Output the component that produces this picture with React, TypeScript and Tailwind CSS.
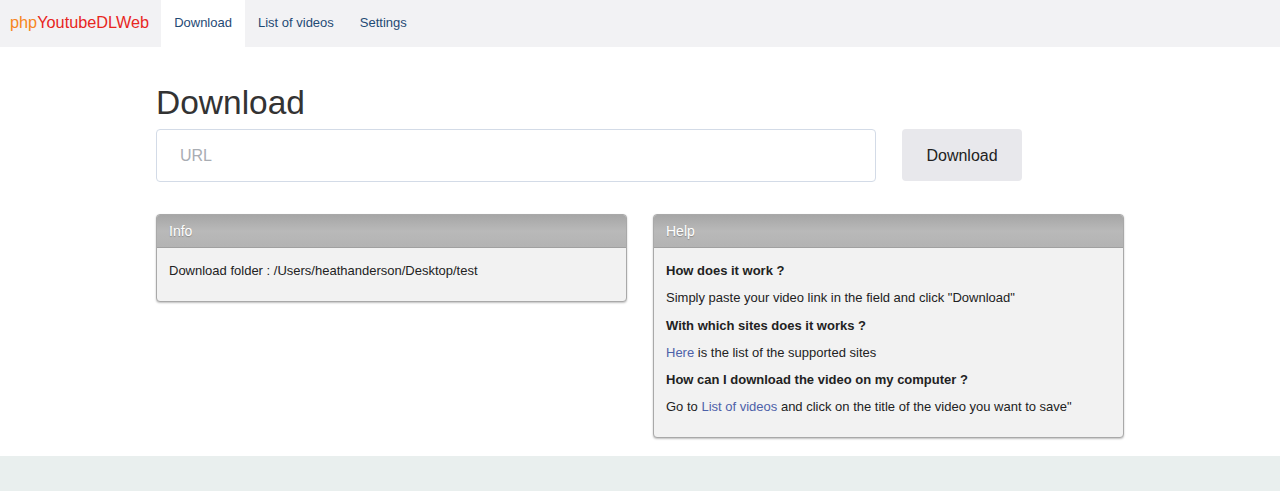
import React from "react";

function Panel({ title, children }: { title: string; children: React.ReactNode }) {
  return (
    <div className="rounded-[4px] border border-[#a9a9a9] bg-[#f2f2f2] shadow-[0_1px_2px_rgba(0,0,0,0.25)] overflow-hidden">
      <div className="h-[33px] flex items-center px-[12px] bg-gradient-to-b from-[#a6a6a6] via-[#b9b9b9] to-[#b3b3b3] border-b border-[#a0a0a0] text-white text-[14px] [text-shadow:0_1px_1px_rgba(0,0,0,0.25)]">
        {title}
      </div>
      <div className="px-[12px] pt-[14px] pb-[13px] text-[13px] leading-[18px] text-[#222]">{children}</div>
    </div>
  );
}

export default function App() {
  return (
    <div className="min-h-[491px] bg-white flex flex-col" style={{ fontFamily: '"Liberation Sans", Arial, sans-serif' }}>
      <nav className="h-[47px] bg-[#f2f2f4] flex items-stretch">
        <div className="flex items-center pl-[10px] pr-[12px] pb-[2px] text-[16.3px]">
          <span className="text-[#f7861d]">php</span>
          <span className="text-[#e8261e]">YoutubeDLWeb</span>
        </div>
        <div className="flex items-center px-[13px] pb-[2px] bg-white text-[13px] text-[#1f4a75]">Download</div>
        <div className="flex items-center px-[13px] pb-[2px] text-[13px] text-[#1f4a75]">List of videos</div>
        <div className="flex items-center px-[13px] pb-[2px] text-[13px] text-[#1f4a75]">Settings</div>
      </nav>

      <main className="w-[968px] mx-auto pt-[37px] pb-[18px]">
        <h1 className="text-[33.5px] leading-[37px] text-[#333] font-normal">Download</h1>
        <div className="mt-[8px] flex items-start gap-[26px]">
          <input
            placeholder="URL"
            className="w-[720px] h-[53px] rounded-[4px] border border-[#d3dbe7] px-[23px] text-[16px] text-[#333] placeholder:text-[#a9adb3] outline-none"
          />
          <button className="w-[120px] h-[52px] pt-[2px] rounded-[4px] bg-[#e8e8ec] text-[16px] text-[#222]">Download</button>
        </div>

        <div className="mt-[32px] grid grid-cols-2 gap-[26px] items-start">
          <Panel title="Info">
            <p className="mb-[8px]">Download folder : /Users/heathanderson/Desktop/test</p>
          </Panel>
          <Panel title="Help">
            <p className="font-bold mb-[9px]">How does it work ?</p>
            <p className="mb-[10px]">Simply paste your video link in the field and click "Download"</p>
            <p className="font-bold mb-[9px]">With which sites does it works ?</p>
            <p className="mb-[9px]">
              <span className="text-[#4d61a9]">Here</span> is the list of the supported sites
            </p>
            <p className="font-bold mb-[9px]">How can I download the video on my computer ?</p>
            <p className="mb-[8px]">
              Go to <span className="text-[#4d61a9]">List of videos</span> and click on the title of the video you want to save"
            </p>
          </Panel>
        </div>
      </main>

      <footer className="flex-1 min-h-[35px] bg-[#e9efee]" />
    </div>
  );
}
